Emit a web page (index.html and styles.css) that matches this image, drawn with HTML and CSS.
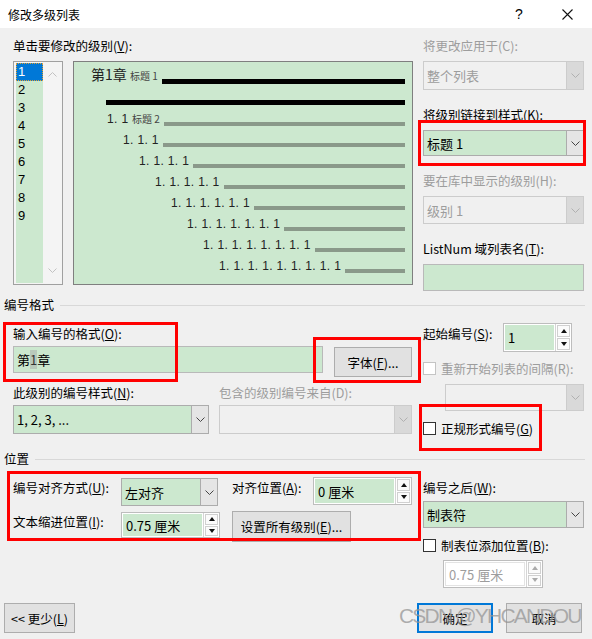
FILE: index.html
```html
<!DOCTYPE html>
<html>
<head>
    <title>修改多级列表</title>
    <link rel="stylesheet" href="styles.css">
</head>
<body>
<div class="dialog">
    <div class="titlebar">
        <span class="title">修改多级列表</span>
        <span class="help">?</span>
        <span class="close">
            <svg width="11" height="11" viewBox="0 0 11 11"><path d="M0.5 0.5 L10.5 10.5 M10.5 0.5 L0.5 10.5" stroke="#111" stroke-width="1.1" fill="none"/></svg>
        </span>
    </div>

    <!-- levels + preview -->
    <div class="top">
        <div class="levels">
            <div class="label">单击要修改的级别(<u>V</u>):</div>
            <div class="levels-body">
                <div class="level-list">
                    <ul>
                        <li class="sel">1</li>
                        <li>2</li>
                        <li>3</li>
                        <li>4</li>
                        <li>5</li>
                        <li>6</li>
                        <li>7</li>
                        <li>8</li>
                        <li>9</li>
                    </ul>
                    <div class="scroll">
                        <svg width="9" height="5" viewBox="0 0 9 5"><path d="M0.5 4.5 L4.5 0.5 L8.5 4.5" stroke="#c2c2c2" fill="none"/></svg>
                        <svg width="9" height="5" viewBox="0 0 9 5"><path d="M0.5 0.5 L4.5 4.5 L8.5 0.5" stroke="#c2c2c2" fill="none"/></svg>
                    </div>
                </div>
                <div class="preview">
                    <div class="pv-row lv1"><span class="num chap">第1章 <small>标题 1</small></span><span class="bar dark"></span></div>
                    <div class="pv-row lv-bar"><span class="bar dark"></span></div>
                    <div class="pv-row lv2"><span class="num">1. 1 <small>标题 2</small></span><span class="bar"></span></div>
                    <div class="pv-row lv3"><span class="num">1. 1. 1</span><span class="bar"></span></div>
                    <div class="pv-row lv4"><span class="num">1. 1. 1. 1</span><span class="bar"></span></div>
                    <div class="pv-row lv5"><span class="num">1. 1. 1. 1. 1</span><span class="bar"></span></div>
                    <div class="pv-row lv6"><span class="num">1. 1. 1. 1. 1. 1</span><span class="bar"></span></div>
                    <div class="pv-row lv7"><span class="num">1. 1. 1. 1. 1. 1. 1</span><span class="bar"></span></div>
                    <div class="pv-row lv8"><span class="num">1. 1. 1. 1. 1. 1. 1. 1</span><span class="bar"></span></div>
                    <div class="pv-row lv9"><span class="num">1. 1. 1. 1. 1. 1. 1. 1. 1</span><span class="bar"></span></div>
                </div>
            </div>
        </div>

        <div class="side">
            <div class="label disabled">将更改应用于(C):</div>
            <div class="select disabled h29">
                <span class="value">整个列表</span>
                <span class="arrow"><svg width="9" height="5" viewBox="0 0 9 5"><path d="M0.5 0.5 L4.5 4.5 L8.5 0.5" stroke="#b0b0b0" fill="none"/></svg></span>
            </div>
            <div class="label gap">将级别链接到样式(<u>K</u>):</div>
            <div class="select h26">
                <span class="value">标题 1</span>
                <span class="arrow"><svg width="9" height="5" viewBox="0 0 9 5"><path d="M0.5 0.5 L4.5 4.5 L8.5 0.5" stroke="#444" fill="none"/></svg></span>
            </div>
            <div class="label gap disabled">要在库中显示的级别(H):</div>
            <div class="select disabled h28">
                <span class="value">级别 1</span>
                <span class="arrow"><svg width="9" height="5" viewBox="0 0 9 5"><path d="M0.5 0.5 L4.5 4.5 L8.5 0.5" stroke="#b0b0b0" fill="none"/></svg></span>
            </div>
            <div class="label gap">ListNum 域列表名(<u>T</u>):</div>
            <div class="input h27"></div>
        </div>
    </div>

    <div class="group-title">编号格式</div>

    <div class="sec">
        <div class="sec-left">
            <div class="label first">输入编号的格式(<u>O</u>):</div>
            <div class="row-input">
                <div class="input format h27">第<span class="caret">1</span>章</div>
                <div class="btn font-btn">字体(<u>F</u>)...</div>
            </div>
            <div class="row-labels">
                <div class="label style-label">此级别的编号样式(<u>N</u>):</div>
                <div class="label disabled">包含的级别编号来自(D):</div>
            </div>
            <div class="row-selects">
                <div class="select h29 w196">
                    <span class="value">1, 2, 3, ...</span>
                    <span class="arrow"><svg width="9" height="5" viewBox="0 0 9 5"><path d="M0.5 0.5 L4.5 4.5 L8.5 0.5" stroke="#444" fill="none"/></svg></span>
                </div>
                <div class="select disabled h29 w193">
                    <span class="value"></span>
                    <span class="arrow"><svg width="9" height="5" viewBox="0 0 9 5"><path d="M0.5 0.5 L4.5 4.5 L8.5 0.5" stroke="#b0b0b0" fill="none"/></svg></span>
                </div>
            </div>
        </div>

        <div class="sec-right">
            <div class="start-row">
                <div class="label start-label">起始编号(<u>S</u>):</div>
                <div class="spin w69 h29">
                    <span class="value">1</span>
                    <span class="spin-btns"><span class="up"></span><span class="down"></span></span>
                </div>
            </div>
            <div class="check-row disabled restart">
                <span class="cb"></span>重新开始列表的间隔(R):
            </div>
            <div class="select disabled h27 restart-select">
                <span class="value"></span>
                <span class="arrow"><svg width="9" height="5" viewBox="0 0 9 5"><path d="M0.5 0.5 L4.5 4.5 L8.5 0.5" stroke="#b0b0b0" fill="none"/></svg></span>
            </div>
            <div class="check-row legal">
                <span class="cb"></span>正规形式编号(<u>G</u>)
            </div>
        </div>
    </div>

    <div class="group-title pos-title">位置</div>

    <div class="sec">
        <div class="sec-left">
            <div class="pos-grid">
                <div class="label">编号对齐方式(<u>U</u>):</div>
                <div class="select h28 w97 nudge">
                    <span class="value">左对齐</span>
                    <span class="arrow"><svg width="9" height="5" viewBox="0 0 9 5"><path d="M0.5 0.5 L4.5 4.5 L8.5 0.5" stroke="#444" fill="none"/></svg></span>
                </div>
                <div class="label">对齐位置(<u>A</u>):</div>
                <div class="spin w99 h28">
                    <span class="value">0 厘米</span>
                    <span class="spin-btns"><span class="up"></span><span class="down"></span></span>
                </div>
                <div class="label">文本缩进位置(<u>I</u>):</div>
                <div class="spin w99 h26 nudge">
                    <span class="value">0.75 厘米</span>
                    <span class="spin-btns"><span class="up"></span><span class="down"></span></span>
                </div>
                <div class="btn all-btn">设置所有级别(<u>E</u>)...</div>
            </div>
        </div>

        <div class="sec-right">
            <div class="label after-label">编号之后(<u>W</u>):</div>
            <div class="select h27 after-select">
                <span class="value">制表符</span>
                <span class="arrow"><svg width="9" height="5" viewBox="0 0 9 5"><path d="M0.5 0.5 L4.5 4.5 L8.5 0.5" stroke="#444" fill="none"/></svg></span>
            </div>
            <div class="check-row tab-row">
                <span class="cb"></span>制表位添加位置(<u>B</u>):
            </div>
            <div class="spin disabled w100 h28 tab-spin">
                <span class="value">0.75 厘米</span>
                <span class="spin-btns"><span class="up"></span><span class="down"></span></span>
            </div>
        </div>
    </div>

    <div class="footer">
        <div class="btn less-btn">&lt;&lt; 更少(<u>L</u>)</div>
        <div class="spacer"></div>
        <div class="btn primary ok-btn">确定</div>
        <div class="btn cancel-btn">取消</div>
    </div>

    <!-- annotations drawn over the dialog -->
    <div class="mark m-link"></div>
    <div class="mark m-format"></div>
    <div class="mark m-font"></div>
    <div class="mark m-legal"></div>
    <div class="mark m-pos"></div>
    <div class="watermark">CSDN @YHCANDOU</div>
</div>
</body>
</html>
```

FILE: styles.css
```css
/* General */
* {
    box-sizing: border-box;
}

body {
    margin: 0;
    font-family: "Noto Sans CJK SC", "Liberation Sans", sans-serif;
    font-size: 12.5px;
    color: #000;
    background: #f0f0f0;
}

.dialog {
    position: relative;
    width: 592px;
    height: 639px;
    background: #f0f0f0;
    overflow: hidden;
}

/* Title bar */
.titlebar {
    height: 28px;
    background: #fff;
    display: flex;
    align-items: center;
    padding-left: 8px;
}

.title {
    flex: 1;
    font-size: 12px;
}

.help {
    width: 50px;
    text-align: center;
    font-family: "Liberation Sans", sans-serif;
    font-size: 14px;
}

.close {
    width: 46px;
    margin-right: 2px;
    display: flex;
    justify-content: center;
}

/* Labels */
.label {
    line-height: 16px;
    height: 16px;
    white-space: nowrap;
}

.disabled,
.label.disabled {
    color: #9d9d9d;
}

u {
    text-decoration: underline;
    text-underline-offset: 1px;
}

/* Top part */
.top {
    display: flex;
    gap: 10px;
    padding: 10px 8px 0 13px;
    height: 269px;
}

.levels {
    width: 400px;
}

.levels-body {
    display: flex;
    gap: 10px;
    margin-top: 7px;
    height: 224px;
}

.level-list {
    width: 50px;
    border: 1px solid #a0a0a0;
    background: #f4f4f4;
    padding: 1px 0 1px 2px;
    display: flex;
}

.level-list ul {
    list-style: none;
    margin: 0;
    padding: 0;
    width: 27px;
    background: #cce8cf;
}

.level-list li {
    height: 18px;
    line-height: 18px;
    padding-left: 2px;
    font-family: "Liberation Sans", sans-serif;
    font-size: 13px;
}

.level-list li.sel {
    background: #0078d7;
    color: #fff;
    outline: 1px dotted #e0a030;
    outline-offset: -1px;
}

.scroll {
    flex: 1;
    display: flex;
    flex-direction: column;
    justify-content: space-between;
    align-items: center;
    padding: 9px 0 10px;
}

/* Preview */
.preview {
    flex: 1;
    border: 1px solid #7f7f7f;
    background: #cce8cf;
    padding: 1px 7px 0 0;
}

.pv-row {
    display: flex;
    align-items: flex-end;
    height: 21px;
}

.pv-row .num {
    font-family: "Liberation Sans", sans-serif;
    font-size: 12px;
    line-height: 14px;
    letter-spacing: 0.35px;
    color: #222;
    margin-right: 4px;
    white-space: nowrap;
}

.pv-row .num small {
    font-family: "Noto Sans CJK SC", sans-serif;
    font-size: 10px;
    letter-spacing: 0;
    color: #444;
}

.pv-row .chap {
    font-family: "Noto Sans CJK SC", sans-serif;
    font-size: 14px;
    line-height: 16px;
    letter-spacing: 0;
    margin-right: 4px;
}

.pv-row .bar {
    flex: 1;
    height: 4px;
    background: #8a998a;
}

.pv-row .bar.dark {
    height: 5px;
    background: #000;
}

.lv1 { padding-left: 17px; }
.lv-bar { padding-left: 32px; }
.lv2 { padding-left: 33px; }
.lv3 { padding-left: 49px; }
.lv4 { padding-left: 65px; }
.lv5 { padding-left: 81px; }
.lv6 { padding-left: 97px; }
.lv7 { padding-left: 113px; }
.lv8 { padding-left: 129px; }
.lv9 { padding-left: 145px; }

/* Right column */
.side {
    width: 161px;
}

.side .label.gap {
    margin-top: 17px;
}

.side .select,
.side .input {
    margin-top: 7px;
}

/* Controls */
.h26 { height: 26px; }
.h27 { height: 27px; }
.h28 { height: 28px; }
.h29 { height: 29px; }
.w69 { width: 69px; }
.w97 { width: 97px; }
.w99 { width: 99px; }
.w100 { width: 100px; }
.w193 { width: 193px; }
.w196 { width: 196px; }

.select {
    display: flex;
    border: 1px solid #acacac;
    background: #cce8cf;
}

.select .value {
    flex: 1;
    display: flex;
    align-items: center;
    padding-left: 3px;
    font-size: 13px;
    white-space: nowrap;
}

.select .arrow {
    width: 17px;
    border-left: 1px solid #acacac;
    background: #e5e5e5;
    display: flex;
    align-items: center;
    justify-content: center;
}

.select.disabled {
    background: #f0f0f0;
    border-color: #cccccc;
    color: #9d9d9d;
}

.select.disabled .arrow {
    background: #d9d9d9;
    border-left-color: #cccccc;
}

.input {
    border: 1px solid #b9b9b9;
    background: #cce8cf;
    display: flex;
    align-items: center;
    padding-left: 3px;
    font-size: 13px;
}

.caret {
    background: #b9c9bb;
    color: #333;
}

.spin {
    display: flex;
    border: 1px solid #bdbdbd;
    background: #fff;
}

.spin .value {
    flex: 1;
    margin: 1px;
    background: #cce8cf;
    display: flex;
    align-items: center;
    padding-left: 3px;
    font-size: 13px;
    white-space: nowrap;
}

.spin-btns {
    width: 16px;
    display: flex;
    flex-direction: column;
    border-left: 1px solid #d5d5d5;
    padding: 1px;
    gap: 1px;
}

.spin-btns span {
    flex: 1;
    border: 1px solid #d0d0d0;
    background: #fbfbfb;
    display: flex;
    align-items: center;
    justify-content: center;
}

.spin-btns .up::after {
    content: "";
    border-left: 3.5px solid transparent;
    border-right: 3.5px solid transparent;
    border-bottom: 4px solid #111;
}

.spin-btns .down::after {
    content: "";
    border-left: 3.5px solid transparent;
    border-right: 3.5px solid transparent;
    border-top: 4px solid #111;
}

.spin.disabled .value {
    background: #fff;
    color: #9d9d9d;
    border: 1px solid #e3e3e3;
}

.spin.disabled .up::after {
    border-bottom-color: #aaa;
}

.spin.disabled .down::after {
    border-top-color: #aaa;
}

.btn {
    border: 1px solid #adadad;
    background: #e1e1e1;
    display: flex;
    align-items: center;
    justify-content: center;
    white-space: nowrap;
}

.btn.primary {
    border: 2px solid #0078d7;
}

.check-row {
    display: flex;
    align-items: center;
    height: 16px;
    white-space: nowrap;
}

.cb {
    width: 13px;
    height: 13px;
    border: 1px solid #333;
    background: #fff;
    margin-right: 5px;
}

.check-row.disabled .cb {
    border-color: #c4c4c4;
}

/* Group titles */
.group-title {
    display: flex;
    align-items: center;
    gap: 6px;
    padding: 0 7px 0 4px;
    line-height: 16px;
    height: 16px;
}

.group-title::after {
    content: "";
    flex: 1;
    border-top: 1px solid #d8d8d8;
    margin-top: 1px;
}

.pos-title {
    margin-top: 15px;
}

/* Sections */
.sec {
    display: flex;
    gap: 10px;
    padding: 0 8px 0 13px;
}

.sec-left {
    width: 400px;
}

.sec-right {
    width: 161px;
}

.label.first {
    margin-top: 13px;
}

.row-input {
    display: flex;
    gap: 11px;
    margin-top: 4px;
}

.format {
    width: 310px;
}

.font-btn {
    width: 78px;
    height: 30px;
    margin-top: 1px;
}

.row-labels {
    display: flex;
    margin-top: 8px;
}

.style-label {
    width: 206px;
}

.row-selects {
    display: flex;
    gap: 10px;
    margin-top: 4px;
}

.start-row {
    display: flex;
    margin-top: 10px;
}

.start-label {
    width: 80px;
    margin-top: 3px;
}

.restart {
    margin-top: 8px;
}

.restart-select {
    width: 139px;
    margin: 8px 0 0 22px;
}

.legal {
    margin-top: 9px;
}

/* Position grid */
.pos-grid {
    display: grid;
    grid-template-columns: 108px 111px 81px 99px;
    row-gap: 5px;
    margin-top: 10px;
    align-items: start;
}

.pos-grid .label {
    margin-top: 3px;
}

.nudge {
    margin-top: 1px;
}

.all-btn {
    grid-column: 3 / span 2;
    width: 119px;
    height: 31px;
}

.after-label {
    margin-top: 13px;
}

.after-select {
    margin-top: 5px;
}

.tab-row {
    margin-top: 9px;
}

.tab-spin {
    margin: 7px 0 0 20px;
}

/* Footer */
.footer {
    display: flex;
    gap: 13px;
    padding: 0 10px 0 4px;
    margin-top: 15px;
}

.footer .btn {
    height: 30px;
}

.spacer {
    flex: 1;
}

.less-btn {
    width: 71px;
}

.ok-btn,
.cancel-btn {
    width: 76px;
}

/* Red annotation boxes */
.mark {
    position: absolute;
    border: 3px solid #ff0000;
}

.m-link { left: 418px; top: 120px; width: 168px; height: 46px; }
.m-format { left: 3px; top: 322px; width: 175px; height: 60px; }
.m-font { left: 313px; top: 337px; width: 108px; height: 46px; }
.m-legal { left: 419px; top: 404px; width: 123px; height: 47px; }
.m-pos { left: 7px; top: 471px; width: 414px; height: 70px; }

.watermark {
    position: absolute;
    left: 399px;
    top: 604px;
    font-family: "Liberation Sans", sans-serif;
    font-size: 21px;
    letter-spacing: -1.8px;
    color: rgba(150, 150, 150, 0.75);
    white-space: nowrap;
}
```
